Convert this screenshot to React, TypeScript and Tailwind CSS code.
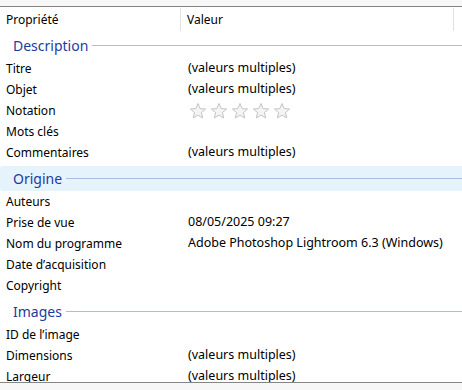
import React from "react";

type Row = { label: string; value?: string; stars?: boolean };
type Section = { title: string; active?: boolean; rows: Row[] };

const sections: Section[] = [
  {
    title: "Description",
    rows: [
      { label: "Titre", value: "(valeurs multiples)" },
      { label: "Objet", value: "(valeurs multiples)" },
      { label: "Notation", stars: true },
      { label: "Mots clés" },
      { label: "Commentaires", value: "(valeurs multiples)" },
    ],
  },
  {
    title: "Origine",
    active: true,
    rows: [
      { label: "Auteurs" },
      { label: "Prise de vue", value: "08/05/2025 09:27" },
      { label: "Nom du programme", value: "Adobe Photoshop Lightroom 6.3 (Windows)" },
      { label: "Date d’acquisition" },
      { label: "Copyright" },
    ],
  },
  {
    title: "Images",
    rows: [
      { label: "ID de l’image" },
      { label: "Dimensions", value: "(valeurs multiples)" },
      { label: "Largeur", value: "(valeurs multiples)" },
    ],
  },
];

function Star() {
  return (
    <svg width="18" height="18" viewBox="0 0 18 18">
      <path
        d="M9 1.5 L11.1 6.6 L16.6 7 L12.4 10.6 L13.7 16 L9 13.1 L4.3 16 L5.6 10.6 L1.4 7 L6.9 6.6 Z"
        fill="#f4f4f4"
        stroke="#c4c4c4"
        strokeWidth="1"
        strokeLinejoin="round"
      />
    </svg>
  );
}

export default function App() {
  return (
    <div
      className="w-[462px] h-[390px] overflow-hidden bg-[#f7f7f7] flex flex-col text-[12px] text-black"
      style={{ fontFamily: '"Noto Sans", "DejaVu Sans", sans-serif' }}
    >
      <div className="h-[6px] shrink-0" />
      <div className="h-[377px] shrink-0 bg-white border-t border-b border-[#858585] overflow-hidden flex flex-col">
        {/* column header */}
        <div className="h-[25px] shrink-0 flex items-center">
          <div className="w-[181px] h-[23px] pl-[6px] flex items-center border-r border-[#e2e2e2]">Propriété</div>
          <div className="w-[273px] h-[23px] pl-[6px] flex items-center border-r border-[#e2e2e2]">Valeur</div>
        </div>
        {sections.map((s, i) => (
          <div key={s.title} className={i === 0 ? "mt-[1px]" : "mt-[3px]"}>
            <div
              className={`h-[25px] flex items-center pl-[13px] ${s.active ? "bg-[#e5f3fd] rounded-l-[3px]" : ""}`}
            >
              <span className="text-[14px] text-[#1e3a9e] leading-none">{s.title}</span>
              <div className="flex-1 ml-[4px] h-px bg-[#a9bce6]" />
            </div>
            {s.rows.map((r) => (
              <div key={r.label} className="h-[21px] flex items-center">
                <div className="w-[188px] pl-[6px] shrink-0 whitespace-nowrap">{r.label}</div>
                <div className="flex-1 whitespace-nowrap flex items-center text-[12.5px]">
                  {r.stars ? (
                    <div className="flex gap-[3px] ml-[1px]">
                      <Star />
                      <Star />
                      <Star />
                      <Star />
                      <Star />
                    </div>
                  ) : (
                    r.value
                  )}
                </div>
              </div>
            ))}
          </div>
        ))}
      </div>
    </div>
  );
}
